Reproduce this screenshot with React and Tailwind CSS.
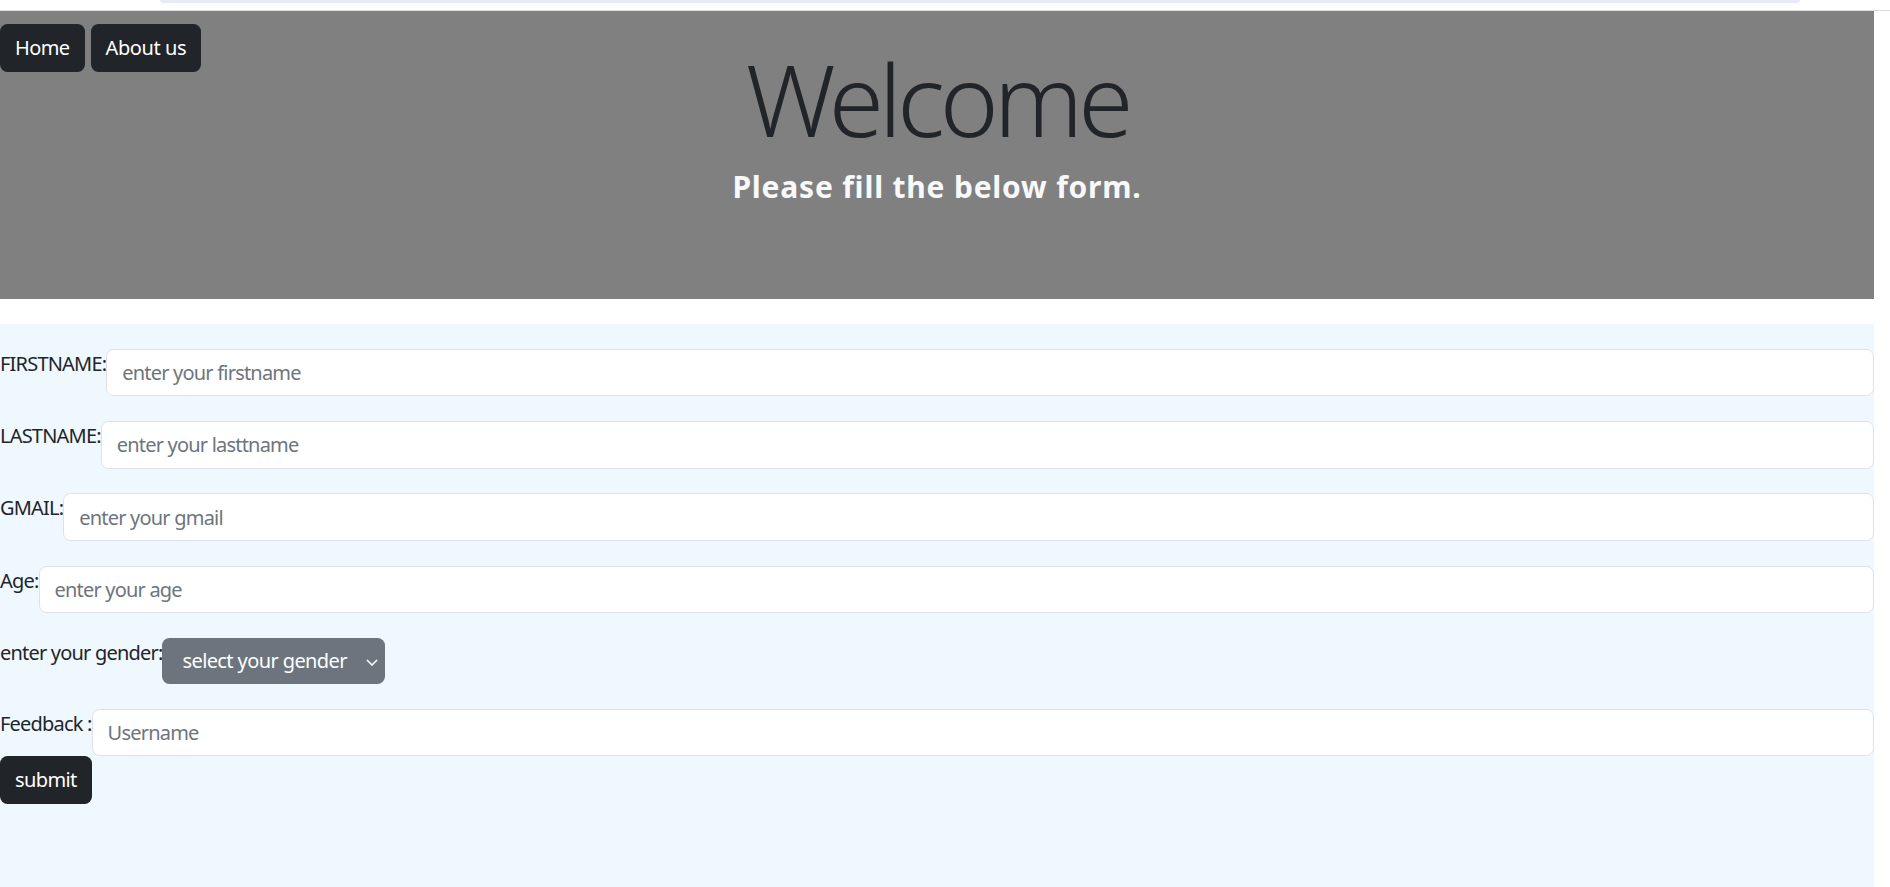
import React from 'react';

const font = { fontFamily: '"Noto Sans", "Open Sans", sans-serif' };

const Field = ({ label, placeholder }) => (
    <div className="flex items-start mt-[24.8px]">
        <label className="text-[20px] leading-[30px] tracking-[-0.8px] text-[#212529] whitespace-pre">{label}</label>
        <input
            type="text"
            placeholder={placeholder}
            className="flex-1 h-[47.5px] px-[15px] bg-white border-[1.25px] border-[#dee2e6] rounded-[7.5px] text-[20px] leading-[30px] tracking-[-0.8px] text-[#212529] placeholder:text-[#6c757d] outline-none"
        />
    </div>
);

export default function App() {
    return (
        <div className="w-[1890px] min-h-[887px] bg-white overflow-hidden" style={font}>
            {/* browser strip */}
            <div className="h-[10px] border-b border-[#dcdcdc] box-content">
                <div className="ml-[160px] w-[1640px] h-[3px] rounded-b-full bg-[#e8ebf7]"></div>
            </div>

            <div className="w-[1874px]">
                {/* Header */}
                <header className="grid h-[288px] bg-[#808080]">
                    <div className="[grid-area:1/1] flex items-start gap-[6px] pt-[13px] z-10">
                        <button className="h-[47.5px] px-[15px] rounded-[7.5px] bg-[#212529] text-white text-[20px] leading-[30px] tracking-[-0.6px]">Home</button>
                        <button className="h-[47.5px] px-[15px] rounded-[7.5px] bg-[#212529] text-white text-[20px] leading-[30px] tracking-[-0.4px]">About us</button>
                    </div>
                    <div className="[grid-area:1/1] flex flex-col items-center">
                        <h1 className="mt-[27px] text-[100px] leading-[120px] font-light tracking-[-5px] text-[#212529]">Welcome</h1>
                        <h4 className="mt-[11px] text-[30px] leading-[36px] font-bold tracking-[0.8px] text-[#f8f9fa]">Please fill the below form.</h4>
                    </div>
                </header>

                {/* Form */}
                <form className="flex flex-col mt-[25px] min-h-[563px] bg-[#f0f8ff]" onSubmit={(e) => e.preventDefault()}>
                    <Field label="FIRSTNAME:" placeholder="enter your firstname" />
                    <Field label="LASTNAME:" placeholder="enter your lasttname" />
                    <Field label="GMAIL:" placeholder="enter your gmail" />
                    <Field label="Age:" placeholder="enter your age" />

                    <div className="flex items-start mt-[24.8px]">
                        <label className="text-[20px] leading-[30px] tracking-[-0.8px] text-[#212529]">enter your gender:</label>
                        <div className="relative">
                            <select className="appearance-none h-[46px] w-[223px] pl-[20px] pr-[36px] rounded-[7.5px] bg-[#6c757d] text-white text-[20px] leading-[30px] tracking-[-0.6px] outline-none">
                                <option>select your gender</option>
                                <option>male</option>
                                <option>female</option>
                            </select>
                            <svg className="absolute right-[7px] top-[21px] pointer-events-none" width="12" height="7" viewBox="0 0 12 7" fill="none">
                                <path d="M1 1l5 5 5-5" stroke="white" strokeWidth="1.6" />
                            </svg>
                        </div>
                    </div>

                    <Field label="Feedback :" placeholder="Username" />

                    <button type="submit" className="self-start h-[47.5px] px-[15px] rounded-[7.5px] bg-[#212529] text-white text-[20px] leading-[30px] tracking-[-0.6px]">submit</button>
                </form>
            </div>
        </div>
    );
}
